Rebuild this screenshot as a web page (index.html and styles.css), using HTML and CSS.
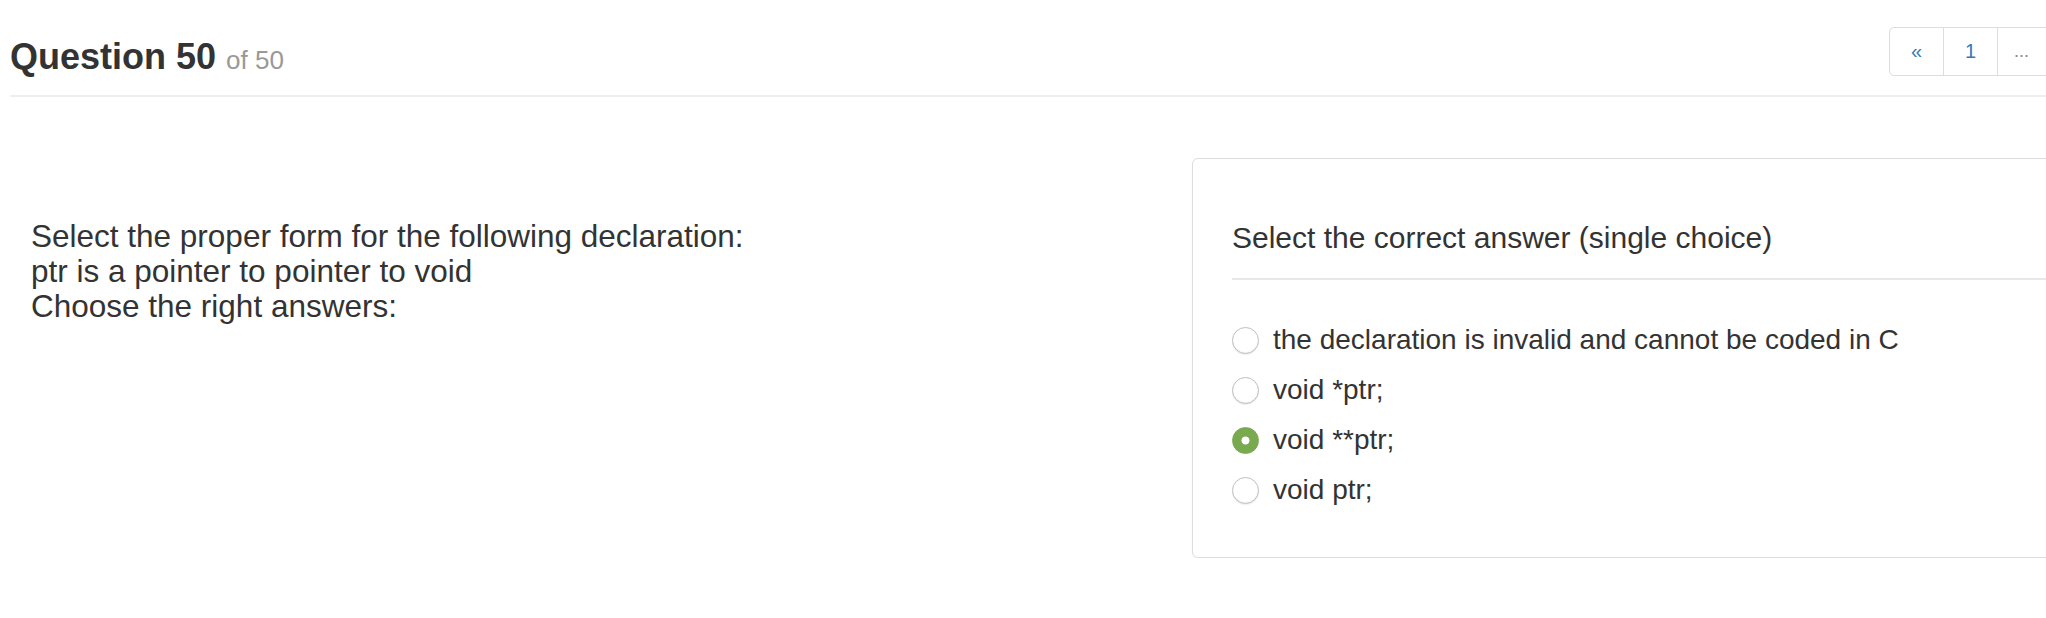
FILE: index.html
```html
<!DOCTYPE html>
<html lang="en">
<head>
<meta charset="utf-8">
<title>Question 50 of 50</title>
<link rel="stylesheet" href="styles.css">
</head>
<body>
<div class="page">
  <header class="quiz-header">
    <h1 class="quiz-title">Question 50 <small class="quiz-count">of 50</small></h1>
    <nav class="pager">
      <a class="pager-cell pager-first" href="#">&laquo;</a>
      <a class="pager-cell" href="#">1</a>
      <span class="pager-cell pager-gap">...</span>
    </nav>
  </header>

  <main class="quiz-body">
    <section class="question">
      <p class="question-text">Select the proper form for the following declaration:<br>ptr is a pointer to pointer to void<br>Choose the right answers:</p>
    </section>

    <section class="answer-card">
      <div class="answer-heading">Select the correct answer (single choice)</div>
      <div class="options">
        <label class="option"><input class="radio" type="radio" name="ans"><span>the declaration is invalid and cannot be coded in C</span></label>
        <label class="option"><input class="radio" type="radio" name="ans"><span>void *ptr;</span></label>
        <label class="option"><input class="radio" type="radio" name="ans" checked><span>void **ptr;</span></label>
        <label class="option"><input class="radio" type="radio" name="ans"><span>void ptr;</span></label>
      </div>
    </section>
  </main>
</div>
</body>
</html>
```

FILE: styles.css
```css
html, body {
  margin: 0;
  padding: 0;
  overflow: hidden;
  background: #fff;
}

body {
  font-family: "Liberation Sans", Arial, Helvetica, sans-serif;
  color: #333;
}

.page {
  width: 2300px;
  padding-left: 10px;
}

/* ---------- header ---------- */
.quiz-header {
  display: flex;
  align-items: flex-start;
  padding-bottom: 15px;
  border-bottom: 2px solid #eee;
}

.quiz-title {
  flex: 0 0 1879px;
  margin: 37px 0 0;
  font-size: 36px;
  line-height: 40px;
  font-weight: bold;
  color: #333;
}

.quiz-count {
  font-size: 26px;
  font-weight: normal;
  color: #999;
}

.pager {
  display: flex;
  margin-top: 27px;
}

.pager-cell {
  display: flex;
  align-items: center;
  justify-content: center;
  width: 53px;
  height: 47px;
  border: 1px solid #ddd;
  margin-left: -1px;
  font-size: 20px;
  color: #337ab7;
  text-decoration: none;
  background: #fff;
}

.pager-first {
  margin-left: 0;
  border-radius: 5px 0 0 5px;
}

.pager-gap {
  width: 80px;
  justify-content: flex-start;
  padding-left: 16px;
  box-sizing: border-box;
  height: 49px;
  color: #888;
  font-size: 18px;
}

/* ---------- body ---------- */
.quiz-body {
  display: flex;
  align-items: flex-start;
  gap: 10px;
  margin-top: 61px;
}

.question {
  flex: 0 0 1151px;
  padding: 61px 0 0 21px;
}

.question-text {
  margin: 0;
  font-size: 31.5px;
  line-height: 35px;
}

.answer-card {
  flex: 0 0 1000px;
  border: 1px solid #ddd;
  border-radius: 6px;
  box-shadow: 0 1px 2px rgba(0, 0, 0, 0.06);
  padding: 61px 0 42px 39px;
}

.answer-heading {
  font-size: 30px;
  line-height: 36px;
  padding-bottom: 22px;
  border-bottom: 2px solid #e7e7e7;
}

.options {
  padding-top: 35px;
}

.option {
  display: flex;
  align-items: center;
  gap: 14px;
  height: 50px;
  font-size: 28px;
  cursor: pointer;
}

.radio {
  appearance: none;
  -webkit-appearance: none;
  flex: 0 0 auto;
  width: 27px;
  height: 27px;
  margin: 0;
  border-radius: 50%;
  border: 1px solid #bfbfbf;
  background: #fff;
  box-shadow: inset 0 -1px 1px rgba(0, 0, 0, 0.05), 0 1px 1px rgba(0, 0, 0, 0.07);
  box-sizing: border-box;
}

.radio:checked {
  border-color: #76a84b;
  background: radial-gradient(circle, #fff 0, #fff 3.6px, #79aa50 4.4px);
  box-shadow: none;
}
```
